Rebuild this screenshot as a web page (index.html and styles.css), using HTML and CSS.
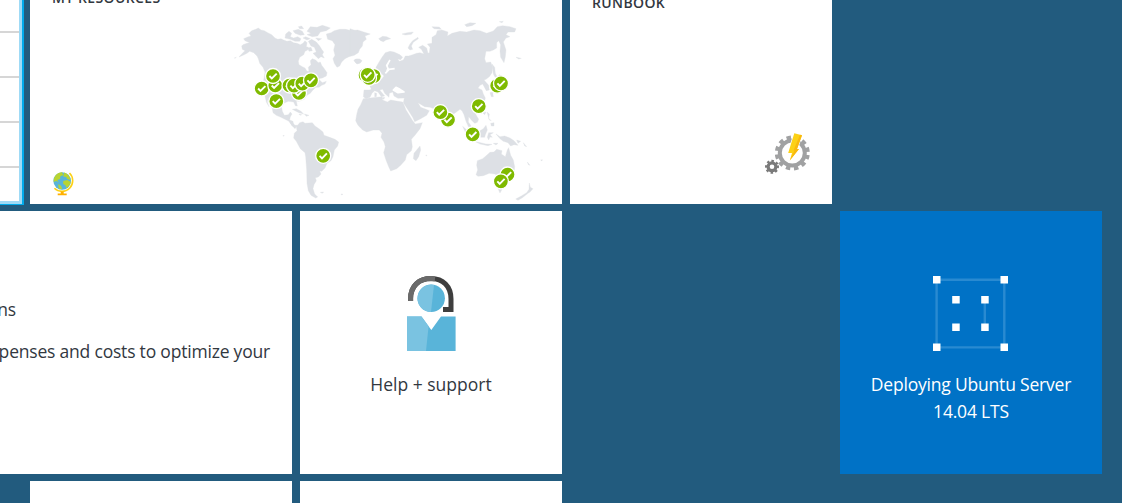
FILE: index.html
```html
<!DOCTYPE html>
<html lang="en">
<head>
<meta charset="utf-8">
<title>Dashboard</title>
<link rel="stylesheet" href="styles.css">
</head>
<body>
<main class="board">
  <section class="tile list-tile">
    <div class="row"></div><div class="row"></div><div class="row"></div><div class="row"></div><div class="row"></div>
  </section>

  <section class="tile resources">
    <h2 class="title">MY RESOURCES</h2>
    <svg class="map" viewBox="30 0 532 204">
      <defs>
        <g id="ok"><circle r="7.5" fill="#7fba00" stroke="#fff" stroke-width="1.3"/><path d="M-3.6 0L-1.2 2.5L3.7-2.4" fill="none" stroke="#fff" stroke-width="1.9"/></g>
      </defs>
      <g class="land">
        <g transform="translate(225 10) scale(.33333)">
          <path d="M80 62L92 58 100 54 108 60 118 62 128 68 140 74 150 84 158 88 168 86 176 90 186 94 196 92 206 98 216 100 226 104 234 100 240 92 246 98 244 110 250 112 248 120 240 124 236 134 224 142 220 154 222 164 232 170 240 174 246 184 252 184 250 172 258 164 256 152 262 146 272 150 280 158 286 156 290 166 298 176 306 188 304 198 292 204 280 206 286 212 292 218 304 214 300 222 290 226 282 232 272 232 262 242 256 250 246 256 238 268 222 274 214 273 217 288 211 287 206 276 190 274 176 280 170 292 172 304 178 316 190 314 196 306 201 312 196 320 194 330 204 334 206 346 214 350 210 356 200 346 192 334 180 328 168 322 154 316 144 308 142 296 134 284 128 268 127 276 132 290 124 276 120 258 118 250 122 236 114 220 118 200 120 186 114 172 104 160 100 146 96 138 86 128 74 124 66 130 54 136 42 141 50 132 60 122 52 118 50 108 54 104 66 100 74 98 60 92 56 86 70 80 78 78 72 70Z"/>
          <path d="M304 72L318 68 328 62 344 58 362 58 380 62 398 60 416 66 436 72 420 78 424 88 414 96 412 108 404 118 400 128 388 136 372 140 360 146 350 156 344 168 336 172 328 160 324 146 330 136 326 120 330 104 322 92 308 88Z"/>
          <path d="M387 152L392 147 404 147 411 152 406 159 396 162ZM250 94L260 88 274 96 284 108 290 118 296 126 292 134 298 144 288 140 280 146 272 138 264 130 274 126 268 112 258 108ZM182 72L192 64 200 70 196 80 206 84 218 80 228 86 224 94 210 94 196 88 180 84ZM204 62L220 58 232 64 238 74 226 76 210 70ZM246 64L256 50 276 52 292 46 306 50 316 54 304 62 286 66 278 78 262 80 246 74 258 70ZM234 84L242 80 256 86 246 90ZM220 50L230 48 236 56 224 56ZM248 114L258 112 262 122 252 124ZM272 84L290 86 280 92ZM28 144L34 142 30 145Z"/>
          <path d="M202 298L214 296 228 304 236 312 222 308 210 302ZM238 312L252 316 244 319ZM222 312L230 314 225 316Z"/>
        </g>
        <g transform="translate(225 100) scale(.33333)">
          <path d="M190 60L202 68 210 76 218 76 224 68 234 65 240 70 262 68 270 78 282 86 294 96 297 106 314 112 330 118 341 126 338 138 328 150 324 170 318 182 306 190 300 204 290 214 284 213 288 222 280 231 271 233 274 242 267 254 264 266 269 282 278 291 272 294 258 286 250 272 246 250 245 210 242 170 240 158 226 146 214 124 206 114 208 100 216 92 214 80 202 78Z"/>
          <path d="M286 277L296 276 292 280ZM348 282L354 283 350 285ZM174 106L178 107 175 109Z"/>
        </g>
        <g transform="translate(350 10) scale(.33333)">
          <path d="M42 240L58 240 64 238 58 224 72 222 84 214 96 206 102 198 96 192 88 196 80 186 78 172 86 158 96 142 106 128 120 124 132 126 150 134 158 142 152 149 143 147 148 154 160 150 166 138 176 138 188 134 200 130 210 128 222 132 214 118 206 112 218 106 230 114 234 130 238 128 240 112 232 102 246 100 246 82 258 74 262 62 276 60 294 66 292 78 306 70 330 64 350 66 372 60 390 62 410 70 430 63 442 50 458 47 480 50 498 56 494 66 474 66 468 74 480 80 468 84 460 96 468 120 466 140 462 158 452 142 450 124 452 104 446 92 440 98 440 114 430 120 420 124 408 124 404 146 408 158 422 156 428 172 426 188 418 200 408 208 402 210 416 226 418 240 409 242 398 222 390 226 384 234 396 240 400 252 406 264 402 282 394 294 384 302 374 306 380 318 386 328 382 337 374 340 366 332 356 320 355 336 362 346 366 360 356 352 348 334 342 314 336 302 330 298 322 304 312 311 304 318 298 338 291 343 282 326 268 308 256 298 240 292 224 290 204 278 212 292 226 297 238 302 230 316 212 326 194 335 188 322 178 306 168 290 160 278 163 264 144 265 132 258 128 246 118 250 117 262 104 250 98 238 89 240 104 258 94 260 84 246 74 242 66 250 60 262 48 266 40 260Z"/>
          <path d="M0 56L18 62 42 70 32 80 30 94 18 110 16 120 0 138ZM12 150L24 147 35 152 28 160 18 160ZM86 86L98 79 110 80 122 86 108 90 100 95 92 92ZM156 72L172 68 190 66 184 73 166 75ZM344 44L360 38 378 40 366 47 350 50ZM448 35L460 34 456 38ZM246 50L268 51 274 58 252 56ZM174 114L180 102 188 92 204 82 205 86 190 97 184 108 188 118 180 120ZM426 162L434 172 436 190 442 202 448 194 454 198 440 210 430 192ZM420 248L428 246 430 260 424 260ZM398 308L408 306 404 314ZM93 264L104 262 102 268ZM74 248L80 250 79 260 74 260ZM498 142L514 145 506 147Z"/>
          <path class="water" d="M120 150L110 166 116 180 106 190M116 178L134 176M130 240L138 232 150 238 162 246 144 248Z"/>
        </g>
        <g transform="translate(350 100) scale(.33333)">
          <path d="M40-4L60-6 80-8 96-10 98 0 112 6 122 0 144 4 158 6 162 14 168 30 178 46 188 62 196 72 217 68 210 86 196 104 184 118 187 140 184 152 170 164 166 180 152 196 140 206 122 213 116 200 108 180 101 158 106 140 102 126 93 112 96 100 88 90 70 90 50 96 38 90 24 76 17 62 20 44 24 28 32 14Z"/>
          <path d="M210 138L212 150 206 170 198 182 190 176 192 160 200 150ZM382 182L398 176 410 166 420 157 432 156 440 148 456 152 454 162 466 170 472 150 476 143 482 166 490 180 494 200 492 220 482 238 470 244 456 240 446 228 434 222 418 220 400 227 384 229 378 224 383 210 380 196ZM445 268L456 268 450 279ZM538 249L541 262 549 266 540 276 534 280 516 294 504 301 497 297 514 288 530 278 537 268ZM390 92L400 86 408 76 412 90 406 104 404 112 392 112ZM338 79L348 88 366 108 376 124 362 117 346 96ZM374 124L392 128 408 132 426 133 414 137 390 132ZM416 98L430 98 420 104 427 112 420 111 416 120 412 112ZM438 102L450 110 464 108 480 114 492 122 504 136 492 134 482 138 474 128 460 124 450 116ZM411 36L418 42 416 56 424 62 418 60ZM422 70L432 68 432 78 424 78ZM500 120L512 124 504 130ZM520 128L530 140 524 138ZM532 186L540 196 535 194ZM572 180L577 179 576 183ZM430 130L444 130 438 135ZM227 166L231 165 229 168Z"/>
        </g>
      </g>
      <use href="#ok" x="299" y="93"/><use href="#ok" x="261.7" y="88.5"/><use href="#ok" x="275.3" y="85.5"/><use href="#ok" x="273" y="76"/><use href="#ok" x="276.3" y="101.2"/>
      <use href="#ok" x="289.5" y="85.5"/><use href="#ok" x="294" y="85.7"/><use href="#ok" x="302.3" y="83.7"/><use href="#ok" x="311" y="80.3"/>
      <use href="#ok" x="365.5" y="75"/><use href="#ok" x="373.8" y="76.2"/><use href="#ok" x="369" y="78"/><use href="#ok" x="367.7" y="74.8"/>
      <use href="#ok" x="497.2" y="85.7"/><use href="#ok" x="501" y="83.3"/><use href="#ok" x="478.8" y="106.2"/><use href="#ok" x="448" y="119.7"/><use href="#ok" x="440.4" y="112.2"/>
      <use href="#ok" x="472.7" y="134.4"/><use href="#ok" x="507.5" y="174.5"/><use href="#ok" x="500.9" y="181.3"/><use href="#ok" x="323.2" y="155.8"/>
      <g transform="translate(62.2 181)">
        <circle r="8.8" fill="#59b4d9"/>
        <path d="M-8.5 1C-9-5-4-9 0-8.6L1-6-2-4.5-2-2-5-1-3.5 1-6 0ZM2-8.4C6-7 8-4 8.4-1L5-2 4-4 1-4.5ZM1 0L5-1 8.6 1C8 4 6 6 4.5 7L3 4 1 3ZM-4 3L-1 5 0 8.6-3.5 7.6Z" fill="#b8d432"/>
        <path d="M7.3-8A10.5 10.5 0 0 1-7.8 7.3" fill="none" stroke="#fcd116" stroke-width="1.6"/>
        <path d="M-1.5 10.5h3v2h3v1.7h-9v-1.7h3Z" fill="#ffb000"/>
      </g>
    </svg>
  </section>

  <section class="tile runbook">
    <h2 class="title">RUNBOOK</h2>
    <svg class="gears" width="48" height="44" viewBox="764 132 48 44">
      <g fill="none" stroke="#a0a1a2">
        <circle cx="792.3" cy="153" r="12.5" stroke-width="4"/>
        <circle cx="792.3" cy="153" r="15.6" stroke-width="3.8" stroke-dasharray="4.4 3.768" transform="rotate(7 792.3 153)"/>
      </g>
      <g fill="none" stroke="#7a7a7a">
        <circle cx="772" cy="166.8" r="3.9" stroke-width="3.2"/>
        <circle cx="772" cy="166.8" r="5.9" stroke-width="2.2" stroke-dasharray="2.4 2.234" transform="rotate(-12 772 166.8)"/>
      </g>
      <path d="M794.3 133.3L802 135.2 797 149H799L789.8 160.5 792 153H788.2Z" fill="#fcd116" stroke="#fff" stroke-width="1.5" paint-order="stroke"/>
      <path d="M802 135.2L797 149H799L789.8 160.5 794.5 150.5H793.5L800 134.7Z" fill="#f9b90f"/>
    </svg>
  </section>

  <section class="tile costs">
    <p class="line">Azure subscriptions</p>
    <p class="line">Track expenses and costs to optimize your</p>
  </section>

  <section class="tile action help">
    <svg class="icon" width="76" height="76" viewBox="393 276 76 76">
      <path d="M410.6 301V298.5C410.6 286 419 278.6 431 278.6S451 286.5 451 299V309.5H443" fill="none" stroke="#3e3e3e" stroke-width="5"/>
      <path d="M410.6 301V298.5C410.6 286 419 278.6 431 278.6L435 279" fill="none" stroke="#6a6a6a" stroke-width="5"/>
      <circle cx="431.2" cy="298.3" r="13.7" fill="#59b4d9"/>
      <path d="M434 284.9A13.7 13.7 0 1 0 431 312Z" fill="#7ac3e1"/>
      <path d="M407 316.5H421.5L431.3 330 441 316.5H455.6V351H407Z" fill="#59b4d9"/>
      <path d="M407 316.5H421.5L428.6 326.3 426 351H407Z" fill="#7ac3e1"/>
    </svg>
    <p class="label">Help + support</p>
  </section>

  <section class="tile action deploying">
    <svg class="icon" width="76" height="76" viewBox="933 276 76 76">
      <path d="M936.6 279.8H1004.3V347.4H936.6ZM984.8 300V327" fill="none" stroke="#298ad1" stroke-width="2.4"/>
      <path d="M933 276h7.5v7.5h-7.5ZM1000.5 276h7.5v7.5h-7.5ZM933 343.5h7.5v7.5h-7.5ZM1000.5 343.5h7.5v7.5h-7.5ZM952.2 296h7.5v7.5h-7.5ZM981.2 296h7.5v7.5h-7.5ZM952.2 323.5h7.5v7.5h-7.5ZM981.2 323.5h7.5v7.5h-7.5Z" fill="#fff"/>
    </svg>
    <p class="label">Deploying Ubuntu Server<br>14.04 LTS</p>
  </section>

  <section class="tile next-a"></section>
  <section class="tile next-b"></section>
</main>
</body>
</html>
```

FILE: styles.css
```css
body {
  margin: 0;
  width: 1122px;
  height: 503px;
  overflow: hidden;
  background: #225b7e;
  color: #32383f;
  font-family: "Open Sans", "Noto Sans", sans-serif;
}
p, h2 { margin: 0; }
.board {
  display: grid;
  grid-template-columns: repeat(5, 262px);
  grid-template-rows: 204px 263px 22px;
  gap: 7px 8px;
  margin-left: -240px;
}
.tile { background: #fff; overflow: hidden; }
.list-tile {
  grid-column: 1;
  box-sizing: border-box;
  width: 264px;
  height: 205px;
  border: solid #00abec;
  border-width: 0 2px 1px 0;
  box-shadow: inset -3px -3px #9fdaf6;
}
.row {
  box-sizing: border-box;
  width: 259px;
  height: 45px;
  border-bottom: 2px solid #d6d6d6;
}
.row:first-child { height: 33px; }
.row:last-child { border: 0; height: 30px; }
.resources { grid-column: 2 / 4; display: grid; }
.title { grid-area: 1 / 1; font-size: 14px; line-height: 20px; font-weight: 600; white-space: nowrap; letter-spacing: 0.38px; }
.resources .title { margin: -12px 0 0 22px; }
.map { grid-area: 1 / 1; width: 532px; height: 204px; }
.land { fill: #dde0e5; stroke: #dde0e5; stroke-width: 1px; stroke-linejoin: round; }
.water { fill: #fff; stroke: #fff; stroke-width: 5px; }
.runbook { display: flex; flex-direction: column; justify-content: space-between; }
.runbook .title { margin: -7px 0 0 22px; }
.gears { align-self: flex-end; margin: 0 20px 28px 0; }
.costs {
  grid-column: 1 / 3;
  grid-row: 2;
  box-sizing: border-box;
  padding: 84px 22px 0 0;
  display: flex;
  flex-direction: column;
  align-items: flex-end;
  gap: 14px;
  font-size: 17.5px;
  letter-spacing: -0.2px;
  line-height: 28px;
  white-space: nowrap;
}
.costs .line:first-child { margin-right: 254px; }
.action {
  grid-row: 2;
  grid-column: 3;
  box-sizing: border-box;
  padding-top: 65px;
  display: flex;
  flex-direction: column;
  align-items: center;
  gap: 19px;
  font-size: 17.5px;
  letter-spacing: -0.2px;
  line-height: 27px;
  text-align: center;
}
.help { letter-spacing: 0; }
.deploying { grid-column: 5; background: #0072c6; color: #fff; }
.next-a { grid-row: 3; grid-column: 2; }
.next-b { grid-row: 3; grid-column: 3; }
```
